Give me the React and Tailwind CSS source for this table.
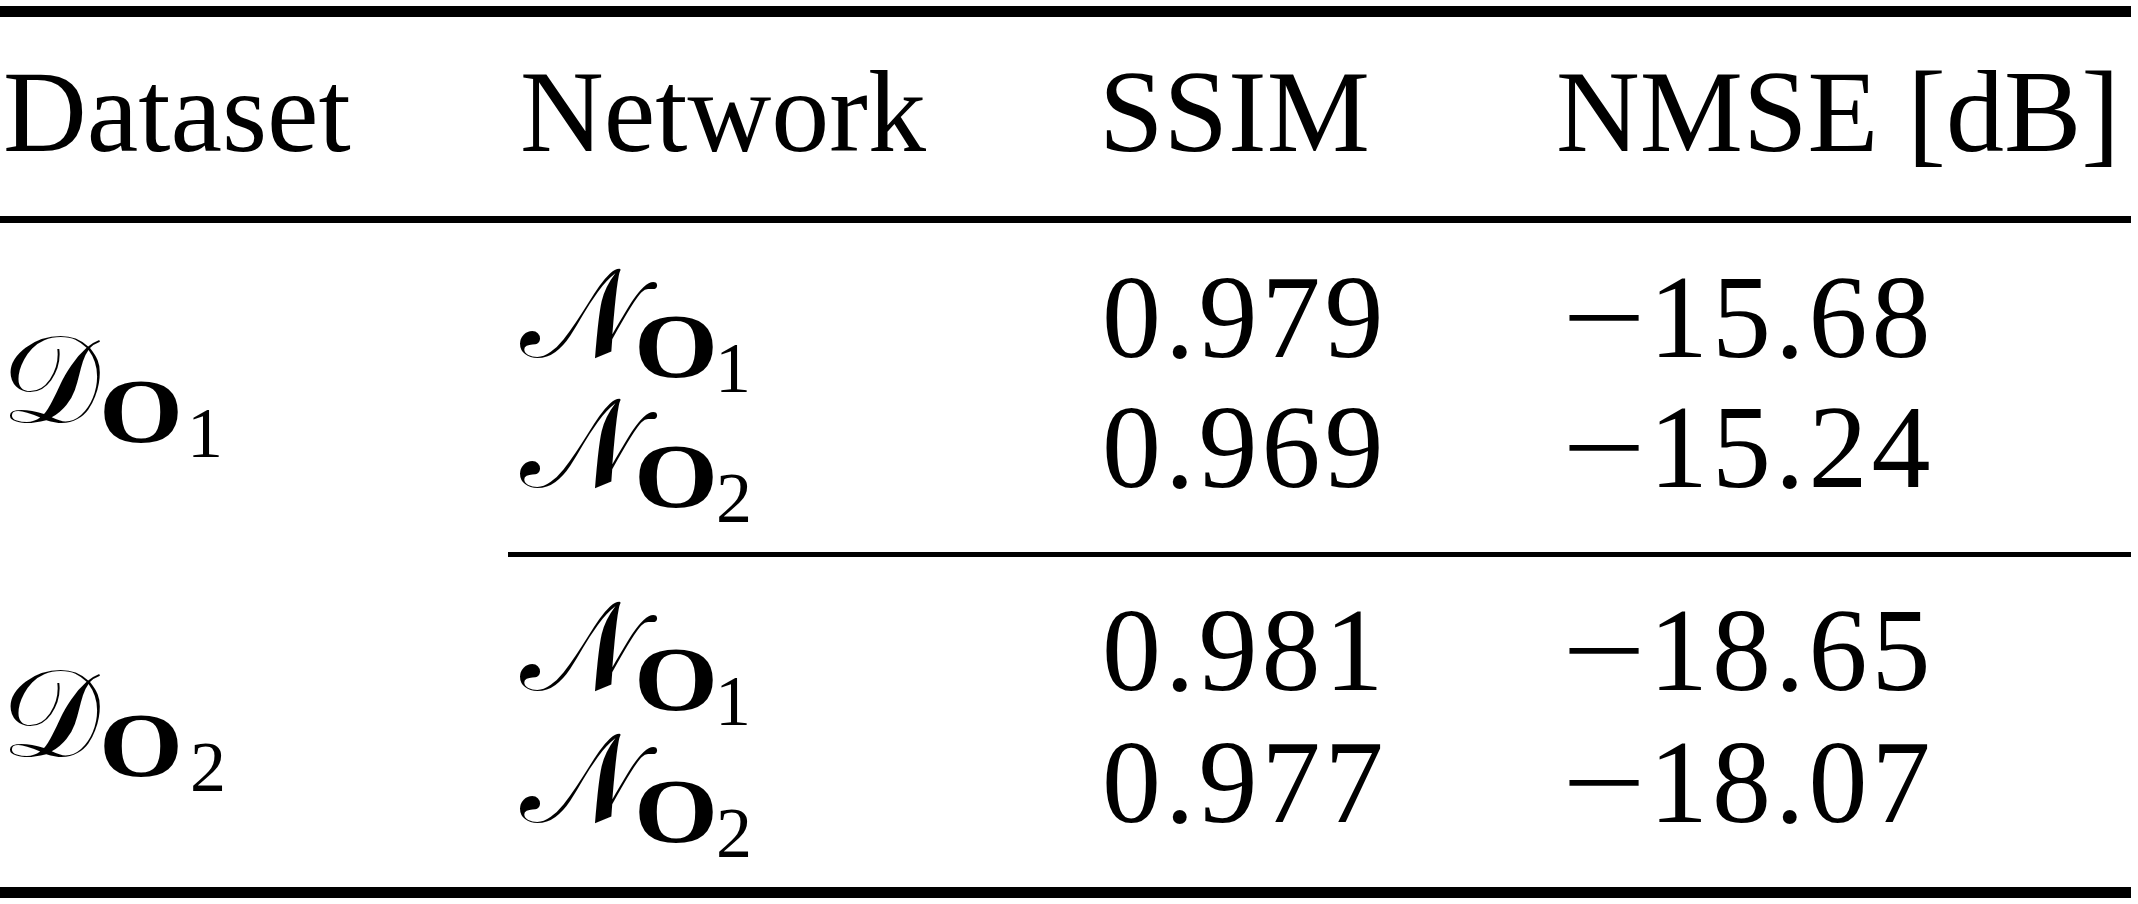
import React from "react";

function OSub({ n, gap }) {
  return (
    <>
      <span className="relative top-[20px] inline-block leading-[0] font-bold text-[90px] scale-x-[1.2] origin-left">O</span>
      <span className={"relative top-[35px] inline-block leading-[0] text-[72px] " + gap}>{n}</span>
    </>
  );
}

function CalN({ n, gap }) {
  return (
    <div className="whitespace-nowrap">
      <span className="inline-block w-[114px] leading-[0] text-[126px] font-['DejaVu_Serif','DejaVu_Sans','Noto_Sans',serif]">𝒩</span>
      <OSub n={n} gap={gap} />
    </div>
  );
}

function Minus() {
  return (
    <span className="inline-block w-[93px]">
      <span className="inline-block scale-x-[1.26] origin-left ml-[6px]">−</span>
    </span>
  );
}

function Group({ d, dgap, rows, padTop, height, lh, lh2 }) {
  return (
    <div className={"grid grid-cols-[520px_579px_457px_1fr] text-[118px] " + height + " " + padTop}>
      <div className={"pl-[1px] whitespace-nowrap " + lh2}>
        <span className="inline-block w-[98px] leading-[0] text-[124px] font-['DejaVu_Serif','DejaVu_Sans','Noto_Sans',serif]">𝒟</span>
        <OSub n={d} gap={dgap} />
      </div>
      <div className={lh}>
        <CalN n="1" gap="ml-[11px]" />
        <CalN n="2" gap="ml-[12px]" />
      </div>
      <div className={"pl-[3px] tracking-[4px] " + lh}>
        <div>{rows[0][0]}</div>
        <div>{rows[1][0]}</div>
      </div>
      <div className={"tracking-[4px] whitespace-nowrap " + lh}>
        <div><Minus />{rows[0][1]}</div>
        <div><Minus />{rows[1][1]}</div>
      </div>
    </div>
  );
}

export default function App() {
  return (
    <div className="w-[2138px] h-[904px] bg-white text-black font-['Liberation_Serif',serif] overflow-hidden">
      <div className="w-[2131px] pt-[6px]">
        <div className="h-[11px] bg-black" />
        <div className="grid grid-cols-[520px_579px_457px_1fr] h-[199px] text-[116px] leading-[190px] whitespace-nowrap">
          <div className="pl-[3px]">Dataset</div>
          <div>Network</div>
          <div>SSIM</div>
          <div>NMSE [dB]</div>
        </div>
        <div className="h-[7px] bg-black" />
        <Group
          d="1"
          dgap="ml-[18px]"
          rows={[["0.979", "15.68"], ["0.969", "15.24"]]}
          padTop="pt-[30px]"
          height="h-[329px]"
          lh="leading-[130px]"
          lh2="leading-[260px]"
        />
        <div className="ml-[508px] h-[5px] bg-black" />
        <Group
          d="2"
          dgap="ml-[21px]"
          rows={[["0.981", "18.65"], ["0.977", "18.07"]]}
          padTop="pt-[28px]"
          height="h-[330px]"
          lh="leading-[132px]"
          lh2="leading-[264px]"
        />
        <div className="h-[11px] bg-black" />
      </div>
    </div>
  );
}
